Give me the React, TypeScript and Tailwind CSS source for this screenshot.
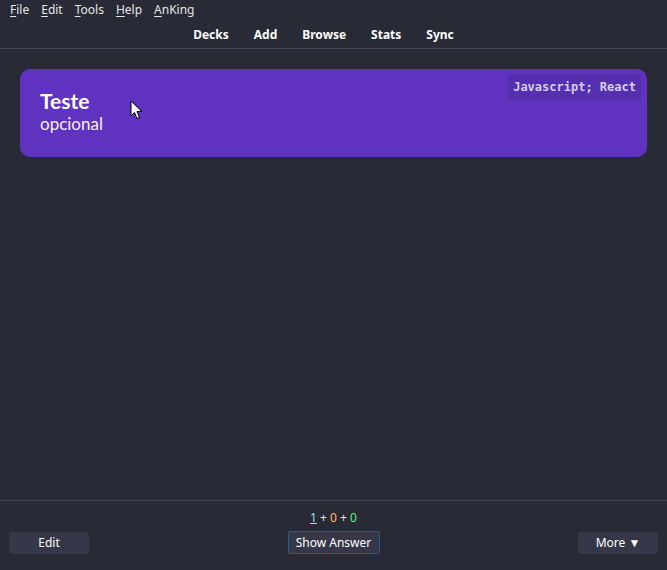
import React from "react";

export default function App() {
  const ui = { fontFamily: '"Noto Sans", "Open Sans", sans-serif' };
  return (
    <div className="w-[667px] h-[570px] bg-[#282a36] text-white flex flex-col overflow-hidden" style={ui}>
      <div className="h-[20px] flex items-center gap-[12px] pl-[10px] text-[12px] text-[#e6e6e6]">
        {["File", "Edit", "Tools", "Help", "AnKing"].map((m) => (
          <span key={m}>
            <span className="underline underline-offset-2">{m[0]}</span>
            {m.slice(1)}
          </span>
        ))}
      </div>
      <div className="h-[29px] border-b border-[#44475a] flex items-center justify-center gap-[25px] text-[12px] font-bold pr-[20px] pt-[2px]">
        {["Decks", "Add", "Browse", "Stats", "Sync"].map((m) => (
          <span key={m}>{m}</span>
        ))}
      </div>
      <div className="flex-1 relative px-[20px] pt-[20px]">
        <div className="relative h-[88px] rounded-[10px] bg-[#5f33bf] px-[20px] pt-[20px]" style={{ fontFamily: '"Lato", "Open Sans", sans-serif' }}>
          <div className="text-[21px] font-bold leading-[24px]">Teste</div>
          <div className="text-[17px] leading-[22px] text-[#f4f0ff]">opcional</div>
          <div className="absolute top-[5px] right-[6px] bg-[#5530ae] rounded-[4px] px-[5px] h-[26px] flex items-center text-[12px] font-bold text-[#d7ccf0]" style={{ fontFamily: '"DejaVu Sans Mono", monospace' }}>
            Javascript; React
          </div>
        </div>
        <svg className="absolute left-[130px] top-[51px]" width="13" height="20" viewBox="0 0 13 20">
          <path d="M1 1 L1 16 L4.5 12.5 L7 18.5 L9.5 17.5 L7 11.5 L12 11.5 Z" fill="#fff" stroke="#000" strokeWidth="1" />
        </svg>
      </div>
      <div className="h-[70px] border-t border-[#44475a] flex flex-col items-center">
        <div className="h-[30px] pt-[9px] text-[12px] leading-[16px]">
          <span className="text-[#8be9fd] underline">1</span>
          <span className="text-[#e6e6e6]"> + </span>
          <span className="text-[#ffb86c]">0</span>
          <span className="text-[#e6e6e6]"> + </span>
          <span className="text-[#50fa7b]">0</span>
        </div>
        <div className="w-full flex justify-between items-center px-[9px]">
          <button className="w-[80px] h-[22px] rounded-[3px] bg-[#363749] text-[12px]">Edit</button>
          <button className="w-[92px] h-[23px] rounded-[2px] bg-[#363749] border border-[#1e5c94] text-[12px]">Show Answer</button>
          <button className="w-[80px] h-[22px] rounded-[3px] bg-[#363749] text-[12px]">More ▼</button>
        </div>
      </div>
    </div>
  );
}
